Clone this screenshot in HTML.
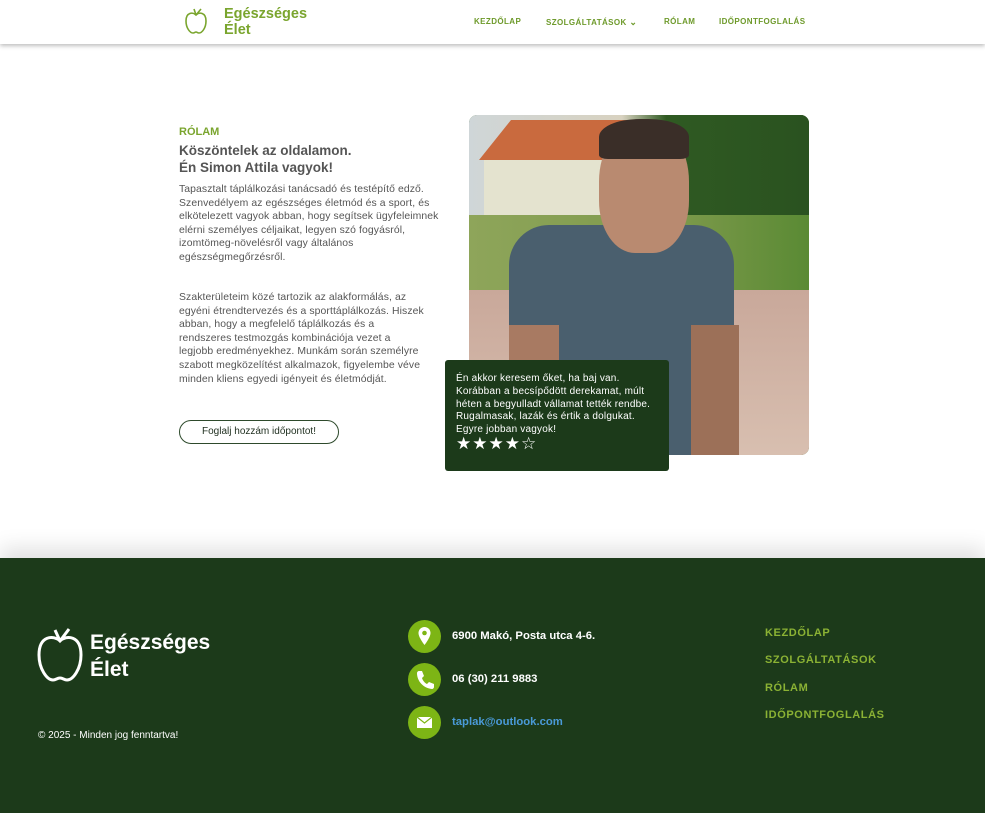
<!DOCTYPE html>
<html><head><meta charset="utf-8"><style>
*{margin:0;padding:0;box-sizing:border-box}
body{width:985px;height:813px;overflow:hidden;background:#fff;font-family:"Liberation Sans",sans-serif;position:relative}
.hdr{position:absolute;left:0;top:0;width:985px;height:44px;background:#fff;box-shadow:0 2px 4px rgba(0,0,0,.25)}
.logo{position:absolute;left:186px;top:5px;color:#7aa52e;font-weight:bold;font-size:14.5px;line-height:16px}
.logo span{position:absolute;left:38px;top:1px;width:100px}
.nav{position:absolute;top:17px;font-size:8px;font-weight:bold;color:#6e9a2b;letter-spacing:.4px}
.abs{position:absolute}
.txt{color:#555;font-size:10.4px;line-height:13.6px;white-space:nowrap;letter-spacing:.1px}
.btn{position:absolute;left:179px;top:420px;width:160px;height:24px;border:1px solid #2e4a2c;border-radius:12px;font-size:10px;color:#1e2e1e;text-align:center;line-height:22px}
.photo{position:absolute;left:469px;top:115px;width:340px;height:340px;border-radius:8px;overflow:hidden;background:#3e6a2a}
.rev{position:absolute;left:445px;top:360px;width:224px;height:111px;background:#1c3a1a;border-radius:3px;color:#fff;font-size:10px;line-height:12.8px;padding:13px 11px;white-space:nowrap;letter-spacing:.2px}
.foot{position:absolute;left:0;top:558px;width:985px;height:255px;background:#1c3a1a;box-shadow:0 -10px 20px rgba(0,0,0,.12)}
.ic{position:absolute;left:408px;width:33px;height:33px;border-radius:50%;background:#7db515}
.ci{position:absolute;left:452px;color:#fff;font-weight:bold;font-size:11.3px}
.fl{position:absolute;left:765px;color:#8bb234;font-weight:bold;font-size:11px;letter-spacing:.6px}
</style></head><body>
<div class="hdr">
 <div class="logo">
  <svg class="abs" style="left:-1px;top:2px" width="22" height="28" viewBox="0 0 22 28"><path d="M11 8C8 5 1 5 1 14c0 7 4 12 7 12 1.5 0 2-1 3-1s1.5 1 3 1c3 0 7-5 7-12 0-9-7-9-10-6zM11 8L9 2M11 8l5-6" fill="none" stroke="#7aa52e" stroke-width="1.6"/></svg>
  <span>Egészséges<br>Élet</span>
 </div>
 <div class="nav" style="left:474px">KEZDŐLAP</div>
 <div class="nav" style="left:546px">SZOLGÁLTATÁSOK <span style="font-size:9px">⌄</span></div>
 <div class="nav" style="left:664px">RÓLAM</div>
 <div class="nav" style="left:719px">IDŐPONTFOGLALÁS</div>
</div>
<div class="abs" style="left:179px;top:126px;color:#7aa52e;font-weight:bold;font-size:11px">RÓLAM</div>
<div class="abs" style="left:179px;top:142px;color:#555;font-weight:bold;font-size:13.5px;line-height:17px">Köszöntelek az oldalamon.<br>Én Simon Attila vagyok!</div>
<div class="abs txt" style="left:179px;top:183px">Tapasztalt táplálkozási tanácsadó és testépítő edző.<br>Szenvedélyem az egészséges életmód és a sport, és<br>elkötelezett vagyok abban, hogy segítsek ügyfeleimnek<br>elérni személyes céljaikat, legyen szó fogyásról,<br>izomtömeg-növelésről vagy általános<br>egészségmegőrzésről.</div>
<div class="abs txt" style="left:179px;top:291px">Szakterületeim közé tartozik az alakformálás, az<br>egyéni étrendtervezés és a sporttáplálkozás. Hiszek<br>abban, hogy a megfelelő táplálkozás és a<br>rendszeres testmozgás kombinációja vezet a<br>legjobb eredményekhez. Munkám során személyre<br>szabott megközelítést alkalmazok, figyelembe véve<br>minden kliens egyedi igényeit és életmódját.</div>
<div class="btn">Foglalj hozzám időpontot!</div>
<div class="photo">
 <div class="abs" style="left:0;top:0;width:340px;height:140px;background:linear-gradient(90deg,#cfd6d8 0,#d8d2c0 45%,#2f5a22 58%,#2a5220 100%)"></div>
 <div class="abs" style="left:10px;top:5px;width:160px;height:40px;background:#c96a3e;clip-path:polygon(20% 0,100% 0,100% 100%,0 100%)"></div>
 <div class="abs" style="left:15px;top:45px;width:120px;height:55px;background:#e4e3cf"></div>
 <div class="abs" style="left:0;top:100px;width:340px;height:80px;background:linear-gradient(90deg,#8ea55a,#7e9a4c 60%,#5a8a34)"></div>
 <div class="abs" style="left:0;top:175px;width:340px;height:165px;background:linear-gradient(180deg,#c9a89a,#d8bfb0)"></div>
 <div class="abs" style="left:40px;top:110px;width:225px;height:240px;background:#4a5f6e;border-radius:40px 40px 0 0"></div>
 <div class="abs" style="left:40px;top:210px;width:50px;height:130px;background:#a87a62"></div>
 <div class="abs" style="left:222px;top:210px;width:48px;height:130px;background:#9c7058"></div>
 <div class="abs" style="left:130px;top:8px;width:90px;height:130px;background:#b98a70;border-radius:45% 45% 40% 40%"></div>
 <div class="abs" style="left:130px;top:4px;width:90px;height:40px;background:#3a2e28;border-radius:45% 45% 10% 10%"></div>
</div>
<div class="rev">Én akkor keresem őket, ha baj van.<br>Korábban a becsípődött derekamat, múlt<br>héten a begyulladt vállamat tették rendbe.<br>Rugalmasak, lazák és értik a dolgukat.<br>Egyre jobban vagyok!<div style="font-size:17px;margin-top:1px;letter-spacing:1px">★★★★☆</div></div>
<div class="foot">
 <svg class="abs" style="left:37px;top:69px" width="46" height="56" viewBox="0 0 46 56"><path d="M23 14C17 8 2 8 2 28c0 14 8 25 14 25 3 0 4-2 7-2s4 2 7 2c6 0 14-11 14-25 0-20-15-20-21-14zM23 14L18 3M23 14l9-12" fill="none" stroke="#fff" stroke-width="3"/></svg>
 <div class="abs" style="left:90px;top:71px;color:#fff;font-weight:bold;font-size:21px;line-height:27px">Egészséges<br>Élet</div>
 <div class="abs" style="left:38px;top:172px;color:#fff;font-size:10px">© 2025 - Minden jog fenntartva!</div>
 <div class="ic" style="top:62px"><svg width="33" height="33" viewBox="0 0 33 33"><path d="M16.5 7a6 6 0 0 0-6 6c0 4.5 6 12 6 12s6-7.5 6-12a6 6 0 0 0-6-6z" fill="#fff"/><circle cx="16.5" cy="13" r="2.3" fill="#7db515"/></svg></div>
 <div class="ic" style="top:105px"><svg width="33" height="33" viewBox="0 0 33 33"><path d="M11 8l3 0 2 5-2 2c1 3 3 5 5 6l2-2 5 2v3c0 1-1 2-2 2C15 25 9 18 9 10c0-1 1-2 2-2z" fill="#fff"/></svg></div>
 <div class="ic" style="top:148px"><svg width="33" height="33" viewBox="0 0 33 33"><rect x="9" y="11" width="15" height="11" fill="#fff"/><path d="M9 11l7.5 6 7.5-6" fill="none" stroke="#7db515" stroke-width="1.2"/></svg></div>
 <div class="ci" style="top:72px">6900 Makó, Posta utca 4-6.</div>
 <div class="ci" style="top:115px">06 (30) 211 9883</div>
 <div class="ci" style="top:158px;color:#4a9ad8">taplak@outlook.com</div>
 <div class="fl" style="top:69px">KEZDŐLAP</div>
 <div class="fl" style="top:96px">SZOLGÁLTATÁSOK</div>
 <div class="fl" style="top:124px">RÓLAM</div>
 <div class="fl" style="top:151px">IDŐPONTFOGLALÁS</div>
</div>
</body></html>
